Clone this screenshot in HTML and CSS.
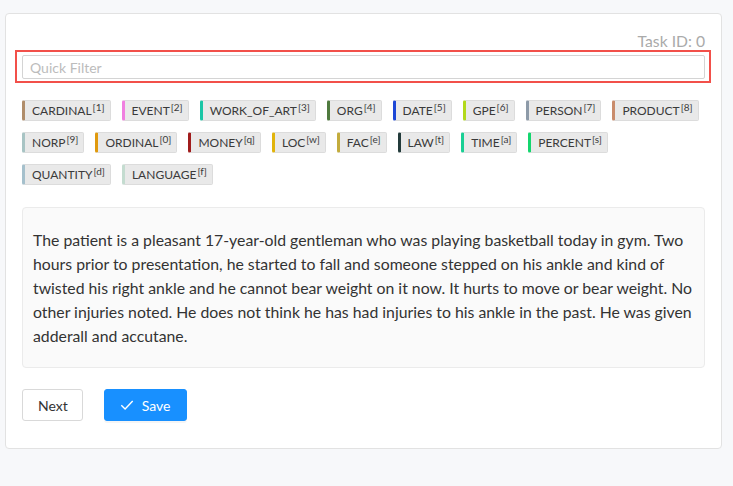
FILE: index.html
```html
<!DOCTYPE html>
<html>
<head>
<meta charset="utf-8">
<link rel="stylesheet" href="styles.css">
</head>
<body>
<div class="card">
  <div class="task-id">Task ID: 0</div>
  <div class="filter-wrap">
    <input class="filter" type="text" placeholder="Quick Filter">
  </div>
  <div class="labels">
    <span class="label" style="border-left-color:#b08d6a">CARDINAL<sup>[1]</sup></span>
    <span class="label" style="border-left-color:#f07fe0">EVENT<sup>[2]</sup></span>
    <span class="label" style="border-left-color:#1ac6a6">WORK_OF_ART<sup>[3]</sup></span>
    <span class="label" style="border-left-color:#4f7a3e">ORG<sup>[4]</sup></span>
    <span class="label" style="border-left-color:#1d47d6">DATE<sup>[5]</sup></span>
    <span class="label" style="border-left-color:#b2d91b">GPE<sup>[6]</sup></span>
    <span class="label" style="border-left-color:#8d9aa8">PERSON<sup>[7]</sup></span>
    <span class="label" style="border-left-color:#c98c6c">PRODUCT<sup>[8]</sup></span>
    <span class="label" style="border-left-color:#a8c4c4">NORP<sup>[9]</sup></span>
    <span class="label" style="border-left-color:#e09a0e">ORDINAL<sup>[0]</sup></span>
    <span class="label" style="border-left-color:#a01c1c">MONEY<sup>[q]</sup></span>
    <span class="label" style="border-left-color:#e1b40c">LOC<sup>[w]</sup></span>
    <span class="label" style="border-left-color:#c3ac3d">FAC<sup>[e]</sup></span>
    <span class="label" style="border-left-color:#233b3b">LAW<sup>[t]</sup></span>
    <span class="label" style="border-left-color:#19cf94">TIME<sup>[a]</sup></span>
    <span class="label" style="border-left-color:#14d66e">PERCENT<sup>[s]</sup></span>
    <span class="label" style="border-left-color:#a5c0cc">QUANTITY<sup>[d]</sup></span>
    <span class="label" style="border-left-color:#c4dcd0">LANGUAGE<sup>[f]</sup></span>
  </div>
  <div class="text-box">The patient is a pleasant 17-year-old gentleman who was playing basketball today in gym. Two hours prior to presentation, he started to fall and someone stepped on his ankle and kind of twisted his right ankle and he cannot bear weight on it now. It hurts to move or bear weight. No other injuries noted. He does not think he has had injuries to his ankle in the past. He was given adderall and accutane.</div>
  <div class="actions">
    <button class="btn btn-next">Next</button>
    <button class="btn btn-primary"><svg class="check" width="14" height="14" viewBox="0 0 14 14"><path d="M1.3 7.2 L5.1 11 L12.7 3" fill="none" stroke="#fff" stroke-width="1.4"/></svg>Save</button>
  </div>
</div>
</body>
</html>
```

FILE: styles.css
```css
html, body {
  margin: 0;
  padding: 0;
  background: #f7f8fa;
}
body {
  padding: 13px 11px 0 5px;
  font-family: Lato, "Noto Sans", sans-serif;
  color: #333;
}
.card {
  background: #fff;
  border: 1px solid #e2e2e2;
  border-radius: 4px;
  padding: 19px 16px 27px 16px;
}
.task-id {
  text-align: right;
  font-size: 15.7px;
  line-height: 17px;
  color: #aaa;
}
.filter-wrap {
  margin: 0 -6px 0 -7px;
  border: 2px solid #f2504a;
  padding: 3px 4px 2px 5px;
}
.filter {
  display: block;
  box-sizing: border-box;
  width: 100%;
  height: 24px;
  border: 1px solid #d4d4d4;
  border-radius: 2px;
  padding: 0 7px;
  font-family: Lato, sans-serif;
  font-size: 14px;
  color: #333;
  outline: none;
}
.filter::placeholder {
  color: #bcbcbc;
}
.labels {
  display: flex;
  flex-wrap: wrap;
  gap: 11px 11px;
  margin-top: 17px;
}
.label {
  box-sizing: border-box;
  height: 21px;
  line-height: 19px;
  background: #e9e9e9;
  border: 1px solid #dcdcdc;
  border-left: 3px solid #999;
  border-radius: 2px;
  padding: 0 5px 0 7px;
  font-size: 12px;
  color: #3a3a3a;
}
.label sup {
  font-size: 10px;
  line-height: 0;
  vertical-align: 0;
  position: relative;
  top: -4px;
  margin-left: 1px;
}
.text-box {
  margin-top: 22px;
  background: #fafafa;
  border: 1px solid #ebebeb;
  border-radius: 4px;
  padding: 20px 11px 19px 10px;
  font-size: 15.8px;
  line-height: 24px;
  color: #333;
}
.actions {
  display: flex;
  gap: 21px;
  margin-top: 21px;
}
.btn {
  height: 32px;
  box-sizing: border-box;
  border: 1px solid #d9d9d9;
  background: #fff;
  border-radius: 3px;
  padding: 0 15px;
  font-family: Lato, sans-serif;
  font-size: 14px;
  color: #333;
  display: flex;
  align-items: center;
}
.btn-next {
  padding: 0 14px 0 15px;
}
.btn-primary {
  background: #1890ff;
  border-color: #1890ff;
  color: #fff;
  padding: 0 15px 0 15px;
  box-shadow: 0 2px 0 rgba(0,0,0,0.04);
}
.check {
  margin-right: 8px;
}
```
